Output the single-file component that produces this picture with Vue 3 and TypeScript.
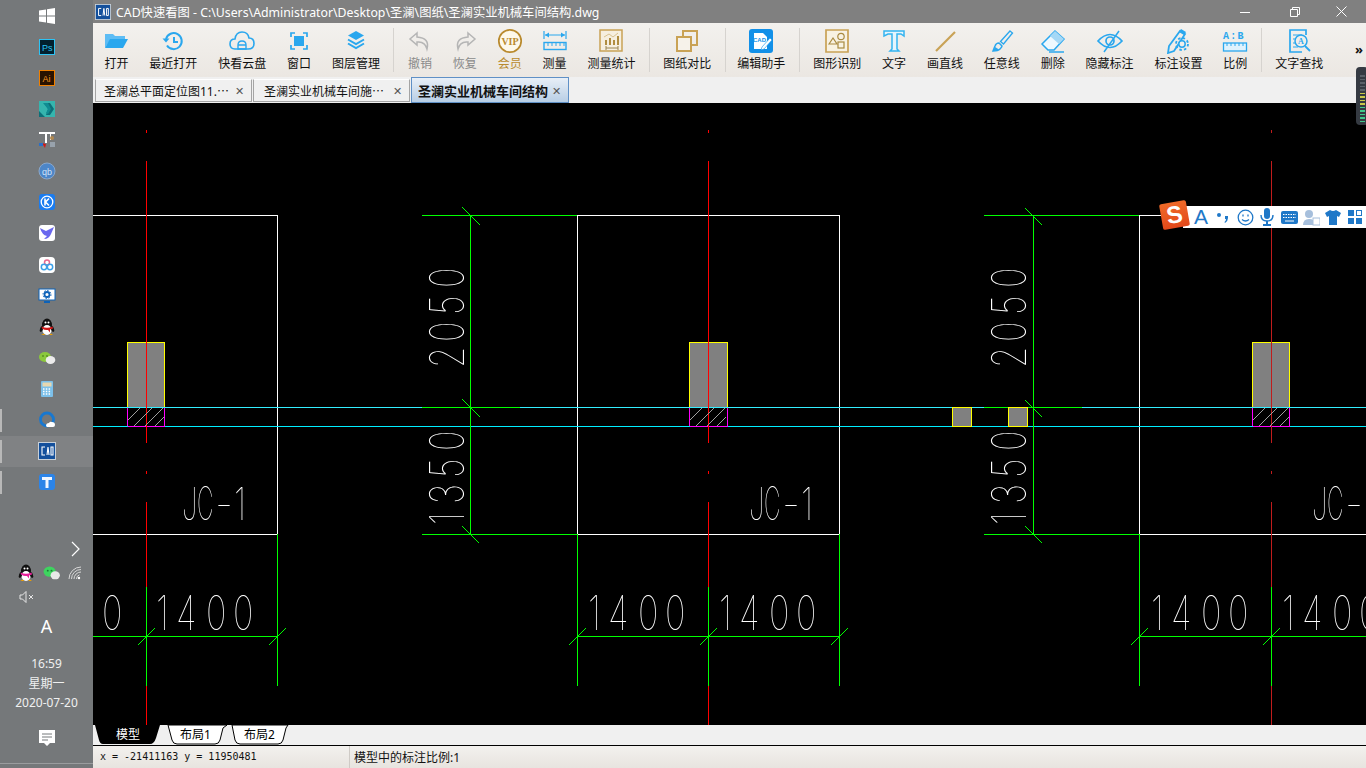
<template>
  <div class="desktop">
    <!-- taskbar on the left -->
    <aside class="taskbar">
      <div class="task-list">
        <div
          v-for="app in taskApps"
          :key="app.id"
          class="task-item"
          :class="{ running: app.running, current: app.current }"
        >
          <svg width="18" height="18" viewBox="0 0 18 18" v-html="app.icon"></svg>
        </div>
      </div>
      <div class="tray">
        <svg class="tray-more" width="12" height="16" viewBox="0 0 12 16">
          <path d="M2 1l7 7-7 7" fill="none" stroke="#fff" stroke-width="1.2" />
        </svg>
        <div class="tray-row">
          <svg width="18" height="20" viewBox="0 0 18 18" v-html="qqTray"></svg>
          <svg width="17" height="14" viewBox="0 0 18 15">
            <ellipse cx="7" cy="6" rx="6.5" ry="5.5" fill="#3ed45f" />
            <ellipse cx="13" cy="10" rx="5" ry="4.3" fill="#e8e8e8" />
            <circle cx="5" cy="5" r="1" fill="#1a7a35" />
            <circle cx="9" cy="5" r="1" fill="#1a7a35" />
          </svg>
          <svg width="14" height="14" viewBox="0 0 14 14" fill="none" stroke="#d8d8d8" stroke-width="1">
            <path d="M1 13a12 12 0 0 1 12-12M3.500 13a9.500 9.500 0 0 1 9.500-9.500M6 13a7 7 0 0 1 7-7M8.500 13a4.500 4.500 0 0 1 3-4.200" />
            <circle cx="11" cy="12" r="1.200" fill="#fff" stroke="none" />
          </svg>
        </div>
        <svg class="tray-sound" width="16" height="14" viewBox="0 0 16 14" fill="none" stroke="#e6e6e6" stroke-width="1">
          <path d="M1 5h2.500L7 1.500v11L3.500 9H1zM10 5l4 4M14 5l-4 4" />
        </svg>
        <div class="ime-letter">A</div>
        <div class="clock">16:59</div>
        <div class="clock">星期一</div>
        <div class="clock">2020-07-20</div>
        <svg class="notice" width="16" height="17" viewBox="0 0 16 17">
          <path d="M0 0h16v13h-5l-3 3-3-3H0z" fill="#fff" />
          <path d="M3 4h10M3 7h10M3 10h6" stroke="#75787a" stroke-width="1" />
        </svg>
        <div class="tray-line"></div>
      </div>
    </aside>

    <main class="window">
      <header class="titlebar">
        <svg class="app-logo" width="16" height="16" viewBox="0 0 18 18" v-html="cadIcon"></svg>
        <span class="title-text">CAD快速看图 - C:\Users\Administrator\Desktop\圣澜\图纸\圣澜实业机械车间结构.dwg</span>
        <div class="win-buttons">
          <svg class="win-min" width="10" height="10" viewBox="0 0 10 10"><path d="M0 5.500h10" stroke="#fff" /></svg>
          <svg width="10" height="10" viewBox="0 0 10 10" fill="none" stroke="#fff"><path d="M.5 2.500h7v7h-7zM2.500 2.500v-2h7v7h-2" /></svg>
          <svg width="11" height="11" viewBox="0 0 11 11"><path d="M.5.500l10 10M10.500.500l-10 10" stroke="#fff" /></svg>
        </div>
      </header>

      <nav class="toolbar">
        <template v-for="tool in tools" :key="tool.label">
          <div v-if="tool.sep" class="tool-sep"></div>
          <div class="tool" :class="tool.tone">
            <svg width="26" height="26" viewBox="0 0 26 26" v-html="tool.icon"></svg>
            <span>{{ tool.label }}</span>
          </div>
        </template>
        <span class="tool-more">»</span>
      </nav>

      <div class="doc-tabs">
        <div class="doc-tab">
          <span class="doc-name">圣澜总平面定位图11.⋯</span><span class="doc-x">✕</span>
        </div>
        <div class="doc-tab second">
          <span class="doc-name">圣澜实业机械车间施⋯</span><span class="doc-x">✕</span>
        </div>
        <div class="doc-tab active">
          <span class="doc-name">圣澜实业机械车间结构</span><span class="doc-x">✕</span>
        </div>
      </div>

      <!-- the drawing itself, coordinates are page pixels -->
      <svg class="drawing" viewBox="93 103 1273 622" shape-rendering="crispEdges">
        <g v-for="col in columns" :key="col.cx">
          <path :d="outline(col)" fill="none" stroke="#fff" />
          <path :d="`M${col.left + 0.5} 534V686M${col.right + 0.5} 534V686`" stroke="#0f0" />
          <rect :x="col.post + 0.5" y="342.500" :width="col.postW" height="65" fill="#808080" stroke="#ff0" />
          <rect :x="col.post + 0.5" y="407.500" :width="col.postW" height="19" fill="#000" stroke="#f0f" />
        </g>
        <path d="M93 426.500H1366" stroke="#00eeff" />
        <path d="M93 407.500H1366" stroke="#33eeff" />
        <path
          v-for="col in columns"
          :key="'m' + col.cx"
          :d="`M${col.post + 0.5} 426.500h${col.postW}`"
          stroke="#f0f"
        />
        <g v-for="col in columns" :key="'d' + col.cx">
          <template v-if="col.dim">
            <path
              :d="`M${col.dimStart} 215.500H${col.left}M${col.dimStart} 534.500H${col.left}M${col.dimStart} 407.500h98M${col.dim + 0.5} 215V534`"
              stroke="#0f0"
              fill="none"
            />
          </template>
          <path :d="`M${col.left} 636.500H${col.right + 1}`" stroke="#0f0" />
          <path :d="`M${col.cx + 0.5} 587V686`" stroke="#0f0" />
          <path
            :d="`M${col.cx + 0.5} 130V133M${col.cx + 0.5} 161V443M${col.cx + 0.5} 471V474M${col.cx + 0.5} 502V587M${col.cx + 0.5} 686V725`"
            :stroke="col.red"
          />
          <g shape-rendering="auto">
            <path :d="hatch(col)" stroke="#a0a0a0" />
            <path :d="ticks(col)" stroke="#0f0" />
          </g>
        </g>
        <rect x="952.500" y="407.500" width="19" height="19" fill="#808080" stroke="#ff0" />
        <rect x="1008.500" y="407.500" width="19" height="19" fill="#808080" stroke="#ff0" />
        <g class="cad-labels">
          <text
            v-for="(g, i) in glyphs"
            :key="i"
            class="cad-text"
            :transform="g.transform"
          >{{ g.ch }}</text>
        </g>
      </svg>

      <div class="sheet-tabs">
        <svg width="200" height="20" viewBox="0 0 200 20">
          <path d="M68 0l-4 3-3 12q-1 4-5 4h-38q-4 0-5-4l-4-15z" fill="#fff" transform="translate(66 0)" stroke="#000" />
          <path d="M132 0l-2 3-3 12q-1 4-5 4h-38q-4 0-5-4l-3-15z" fill="#fff" transform="translate(63 0)" stroke="#000" />
          <path d="M2 0h65l-4 13q-2 6-6 6H10q-3 0-4-4z" fill="#000" />
          <text x="23" y="14" fill="#fff">模型</text>
          <text x="87" y="14" fill="#000">布局1</text>
          <text x="151" y="14" fill="#000">布局2</text>
        </svg>
      </div>

      <footer class="statusbar">
        <div class="coords">x = -21411163 y = 11950481</div>
        <div class="scale">模型中的标注比例:1</div>
      </footer>
    </main>

    <!-- floating widgets -->
    <div class="ime-bar">
      <div class="ime-logo">S</div>
      <span class="ime-a">A</span>
      <svg width="16" height="16" viewBox="0 0 16 16" fill="#1f78c8">
        <circle cx="4" cy="6" r="2" />
        <path d="M10 7h3v2q0 3-3 5l-.500-1q1.500-1 1.500-3h-1z" />
      </svg>
      <svg width="17" height="17" viewBox="0 0 17 17" fill="none" stroke="#1f78c8" stroke-width="1.300">
        <circle cx="8.500" cy="8.500" r="7.300" />
        <path d="M6 5.500v2M11 5.500v2M5 10.500q3.500 3 7 0" />
      </svg>
      <svg width="14" height="18" viewBox="0 0 14 18" fill="#1f78c8">
        <rect x="4" width="6" height="11" rx="3" />
        <path d="M1 7q0 6 6 6t6-6" fill="none" stroke="#1f78c8" stroke-width="1.400" />
        <path d="M6 13h2v3h3v2H3v-2h3z" />
      </svg>
      <svg width="17" height="13" viewBox="0 0 17 13">
        <rect width="17" height="13" rx="2" fill="#1f78c8" />
        <path d="M2 3.500h13M2 6.500h13" stroke="#fff" stroke-dasharray="1.500 1" />
        <path d="M4 10h9" stroke="#fff" />
      </svg>
      <svg width="17" height="17" viewBox="0 0 17 17" fill="#a6bfdc">
        <circle cx="6" cy="5" r="4" />
        <path d="M0 16q0-6 6-6 3 0 4 1v5z" />
        <rect x="10" y="9" width="7" height="7" fill="#fff" stroke="#a6bfdc" />
      </svg>
      <svg width="16" height="15" viewBox="0 0 16 15" fill="#1f78c8">
        <path d="M5 0q3 2 6 0l5 3-2 4-2-1v9H4V6L2 7 0 3z" />
      </svg>
      <svg width="14" height="14" viewBox="0 0 14 14" fill="#1f78c8">
        <rect width="6" height="6" />
        <rect x="8.500" y=".5" width="5" height="5" fill="none" stroke="#1f78c8" />
        <rect y="8" width="6" height="6" />
        <rect x="8" y="8" width="6" height="6" />
      </svg>
    </div>

    <div class="meter">
      <i v-for="(c, i) in meterTicks" :key="i" :style="{ background: c }"></i>
    </div>
  </div>
</template>

<script setup lang="ts">
interface Tool {
  label: string
  icon: string
  sep?: boolean
  tone?: string
}

interface Column {
  cx: number
  left: number
  right: number
  post: number
  postW: number
  dim: number
  dimStart: number
  red: string
}

const blue = '#2aa7ee'
const gold = '#c9a255'

const cadIcon = `<rect width="18" height="18" fill="#c8d0d8"/><rect x="1" y="1" width="16" height="16" fill="#14509c"/>
<path d="M7 5H4v8h3M9 13l1-8 1 8M13 5h2v8h-2z" fill="none" stroke="#fff" stroke-width="1.100"/>`

const qqBody = (scarf: string) => `<ellipse cx="9" cy="7" rx="5" ry="6.500" fill="#111"/>
<ellipse cx="9" cy="12" rx="4.500" ry="5" fill="#fff"/><ellipse cx="3.500" cy="11" rx="1.500" ry="3" fill="#111" transform="rotate(20 3.500 11)"/>
<ellipse cx="14.500" cy="11" rx="1.500" ry="3" fill="#111" transform="rotate(-20 14.500 11)"/>
<path d="M3.500 8.500q5.500 2.500 11 0l.5 2-3 1v3l-2-2.500q-3 .5-6-1.500z" fill="${scarf}"/>
<circle cx="7.500" cy="4.500" r="1" fill="#fff"/><circle cx="10.500" cy="4.500" r="1" fill="#fff"/>
<path d="M3 17h4l-1-1.500zM11 17h4l-2-1.500z" fill="#f0a000"/>`

const qqTray = qqBody('#e8209a')

const taskApps = [
  { id: 'win', icon: `<path d="M1 3.500l7-1v6H1zM9 2.300L17 1v7.500H9zM1 9.500h7v6l-7-1zM9 9.500h8V17l-8-1.200z" fill="#fff"/>` },
  { id: 'ps', icon: `<rect x=".5" y=".5" width="15" height="15" transform="translate(1 1)" fill="#02202f" stroke="#2cc3f5"/><text x="4" y="13" font-size="9" font-family="Liberation Sans" fill="#2cc3f5">Ps</text>` },
  { id: 'ai', icon: `<rect x=".5" y=".5" width="15" height="15" transform="translate(1 1)" fill="#2a1300" stroke="#f08000"/><text x="4.500" y="13" font-size="9" font-family="Liberation Sans" fill="#f89820">Ai</text>` },
  { id: 'max', icon: `<rect x="1" y="1" width="16" height="16" fill="#35b5ae"/><path d="M1 17V11l6 6zM6 3h6l4 6-4 6H8l2-6z" fill="#0d6f78"/><path d="M5 3h5l3 6-3 5-2-1 2-4z" fill="#0f8c92"/>` },
  { id: 'text', icon: `<path d="M1 1h16v2H1zM7 3h2v9H7zM12 3h1v6h-1z" fill="#fff"/><path d="M4 12l4 1-1 4z" fill="#d01818"/><rect x="1" y="12" width="4" height="3" fill="#2a70c8"/><rect x="12" y="11" width="5" height="5" fill="#98a2ac"/><circle cx="14" cy="7" r="2" fill="#b08850"/>` },
  { id: 'qb', icon: `<circle cx="9" cy="9" r="8" fill="#4d86c8" stroke="#8aa8cc"/><text x="9" y="12.500" text-anchor="middle" font-size="9" font-family="Liberation Sans" fill="#cfe3f8">qb</text>` },
  { id: 'k', icon: `<rect x="1" y="1" width="16" height="16" rx="3" fill="#1a7cf0"/><circle cx="9" cy="9" r="5.800" fill="none" stroke="#fff" stroke-width="1.300"/><path d="M7 5.500v7M11 5.500L7.500 9l3.500 3.500" fill="none" stroke="#fff" stroke-width="1.600"/>` },
  { id: 'bird', icon: `<rect x="1" y="1" width="16" height="16" rx="3" fill="#fff"/><path d="M2 4l6 3 8-4-3 7q-2 5-7 5l3-3Q4 11 2 4z" fill="#6a68ee"/>` },
  { id: 'rings', icon: `<rect x="1" y="1" width="16" height="16" rx="4" fill="#fff"/><g fill="none" stroke-width="1.500"><circle cx="9" cy="6.500" r="2.500" stroke="#e86a90"/><circle cx="6" cy="11" r="2.700" stroke="#3ca0e8"/><circle cx="12" cy="11" r="2.700" stroke="#3ca0e8"/></g>` },
  { id: 'monitor', icon: `<rect x="1" y="2" width="16" height="11" fill="#fff" stroke="#0d62b8"/><path d="M6 14h6v2H6z" fill="#0d62b8"/><circle cx="9" cy="7.500" r="2.500" fill="none" stroke="#0d62b8" stroke-width="1.800"/><circle cx="9" cy="7.500" r="4" fill="none" stroke="#0d62b8" stroke-dasharray="1.500 1.600"/>` },
  { id: 'qq', icon: qqBody('#d01818') },
  { id: 'wechat', icon: `<ellipse cx="7" cy="8" rx="6" ry="5" fill="#8bc83c"/><ellipse cx="12.500" cy="11" rx="4.800" ry="4" fill="#ececec"/><circle cx="5" cy="7" r=".8" fill="#356b10"/><circle cx="9" cy="7" r=".8" fill="#356b10"/>` },
  { id: 'calc', icon: `<rect x="3" y="1" width="12" height="16" rx="1" fill="#7cc0ea"/><rect x="4.500" y="2.500" width="9" height="4" fill="#e8d8b0"/><path d="M5 9h8M5 11.500h8M5 14h8" stroke="#fff" stroke-width="1.300" stroke-dasharray="1.500 1.300"/>` },
  { id: 'cloud', running: true, icon: `<circle cx="9" cy="8.500" r="6.500" fill="none" stroke="#1878d0" stroke-width="2.800"/><path d="M8 15q0-3 3-3 1-2 3-1 3 0 3 3 0 2-2 2H9z" fill="#fff"/>` },
  { id: 'cad', running: true, current: true, icon: cadIcon },
  { id: 'tblue', running: true, icon: `<rect x="1" y="1" width="16" height="16" rx="3" fill="#2c84e8"/><path d="M4 4h10v3h-3.500v8h-3V7H4z" fill="#f0f6ff"/>` },
]

const tools: Tool[] = [
  { label: '打开', icon: `<path d="M2 6h8l2 2h10v3H8l-6 9z" fill="#5dbcf4"/><path d="M7 11h18l-5 9H2z" fill="${blue}"/>` },
  { label: '最近打开', icon: `<g fill="none" stroke="${blue}" stroke-width="2"><path d="M6 11a8 8 0 1 1 1 6.500"/><path d="M14 9v5h4"/></g><path d="M2.500 10.500h7l-3.500 4z" fill="${blue}"/>` },
  { label: '快看云盘', icon: `<path d="M6 21q-5 0-5-5t5-5q1-7 7-7t7 6q5 0 5 5.500T19 21z" fill="none" stroke="${blue}" stroke-width="1.600"/><path d="M9 21v-4q0-4 4-4t4 4v4zM9 17h8" fill="none" stroke="${blue}" stroke-width="1.400"/>` },
  { label: '窗口', icon: `<path d="M5 9V5h4M17 5h4v4M21 17v4h-4M9 21H5v-4" fill="none" stroke="${blue}" stroke-width="1.700"/><rect x="8" y="8" width="10" height="10" fill="${blue}"/>` },
  { label: '图层管理', icon: `<path d="M13 3l8 4.500-8 4.500-8-4.500z" fill="${blue}"/><path d="M5 11.500l8 4.500 8-4.500M5 15.500l8 4.500 8-4.500" fill="none" stroke="${blue}" stroke-width="2"/>` },
  { label: '撤销', sep: true, tone: 'off', icon: `<path d="M10 5L3 11l7 6v-3q8-1 10 7 3-11-10-12z" fill="none" stroke="#b5b5b5" stroke-width="1.500"/>` },
  { label: '恢复', tone: 'off', icon: `<path d="M16 5l7 6-7 6v-3q-8-1-10 7-3-11 10-12z" fill="none" stroke="#b5b5b5" stroke-width="1.500"/>` },
  { label: '会员', tone: 'vip', icon: `<circle cx="13" cy="13" r="11.200" fill="#fdf8ea" stroke="#b98a2e" stroke-width="1.700"/><text x="13" y="16.500" text-anchor="middle" font-size="10" font-weight="700" font-family="Liberation Serif" fill="#b98a2e">VIP</text>` },
  { label: '测量', icon: `<g fill="none" stroke="${blue}"><path d="M2 3v8M24 3v8M3 7h20" stroke-width="1.200"/><rect x="2" y="14.500" width="22" height="7" stroke-width="1.400"/><path d="M6 15v3M10 15v3M14 15v3M18 15v3M22 15v3"/></g><path d="M3 7l4-2.500v5zM23 7l-4-2.500v5z" fill="${blue}"/>` },
  { label: '测量统计', icon: `<path d="M2 2h22v21H2z" fill="#f6efe0" stroke="${gold}" stroke-width="1.500"/><path d="M7 12h2v5H7zM11 10h2v7h-2zM15 12h2v5h-2zM19 8h2v9h-2z" fill="#b08d40"/><path d="M6 9l5-3 4 3 5-4" fill="none" stroke="#d8c290"/><path d="M8 20h12M8 18v4M20 18v4" stroke="#9a8550" fill="none"/>` },
  { label: '图纸对比', sep: true, icon: `<g fill="none" stroke="${gold}" stroke-width="2"><rect x="9" y="3" width="14" height="14"/><rect x="3" y="9" width="14" height="14" fill="#f6f2ea"/></g>` },
  { label: '编辑助手', sep: true, tone: 'tight', icon: `<rect x="1" y="1" width="24" height="24" rx="3" fill="#1290e8"/><path d="M6 5h9l4 4v12H6z" fill="#fff"/><text x="11.500" y="14" text-anchor="middle" font-size="6" font-weight="700" font-family="Liberation Sans" fill="#1290e8">CAD</text><path d="M14 19l8-9 2 2-8 9-3 1z" fill="#fff" stroke="#1290e8" stroke-width=".6"/>` },
  { label: '图形识别', sep: true, icon: `<path d="M2 2h22v22H2z" fill="#f8f2e2" stroke="${gold}" stroke-width="1.700"/><g fill="none" stroke="#a98a40" stroke-width="1.200"><circle cx="17" cy="8.500" r="3.200"/><path d="M5 16l4-6 4 6z"/><rect x="14" y="14" width="6" height="6"/></g>` },
  { label: '文字', icon: `<path d="M3 3h20v5l-3-2h-4v15l2 2H9l2-2V6H7L3 8z" fill="#e6f5fd" stroke="#35b4f0" stroke-width="1.500"/>` },
  { label: '画直线', icon: `<path d="M4 23L23 4" stroke="${gold}" stroke-width="2.200"/>` },
  { label: '任意线', icon: `<path d="M21 3l2.500 2-9 11-3-2.500z" fill="none" stroke="${blue}" stroke-width="1.300"/><path d="M10 15q-3 0-4 3l-2 5q5 0 7-2t2-3z" fill="none" stroke="${blue}" stroke-width="1.500"/><path d="M6 19l-2 4q4 0 6-1.500z" fill="${blue}"/>` },
  { label: '删除', icon: `<path d="M15 3l9 8-10 11H8l-6-6z" fill="#eef8fe" stroke="${blue}" stroke-width="1.500"/><path d="M10 8l9 8 5-5-9-8z" fill="#a5d8f6"/><path d="M9 24h15" stroke="${blue}" stroke-width="1.500"/>` },
  { label: '隐藏标注', icon: `<path d="M1 13q12-13 24 0-12 13-24 0z" fill="none" stroke="${blue}" stroke-width="1.700"/><circle cx="13" cy="13" r="4" fill="none" stroke="${blue}" stroke-width="1.700"/><path d="M7 24L22 3" stroke="${blue}" stroke-width="1.500"/>` },
  { label: '标注设置', icon: `<path d="M15 3l5 3-11 17-6 2 1-7z" fill="none" stroke="${blue}" stroke-width="1.800"/><path d="M16 1l5 3-2 3-5-3z" fill="${blue}"/><circle cx="17" cy="16" r="3.200" fill="#f1eeea" stroke="${blue}" stroke-width="1.500"/><circle cx="17" cy="16" r="6" fill="none" stroke="${blue}" stroke-width="1.800" stroke-dasharray="2.500 2.200"/>` },
  { label: '比例', icon: `<text x="1" y="11" font-size="10" font-weight="700" font-family="Liberation Mono" letter-spacing="1.200" fill="${blue}">A:B</text><rect x="1.500" y="15" width="23" height="8" fill="#dff2fd" stroke="${blue}" stroke-width="1.300"/><path d="M5 15v3M9 15v3M13 15v3M17 15v3M21 15v3" stroke="${blue}"/>` },
  { label: '文字查找', sep: true, icon: `<path d="M20 7V2H4v22h12" fill="none" stroke="${blue}" stroke-width="1.700"/><path d="M7 7h9M7 11h3M7 15h3M7 19h5" stroke="${blue}"/><circle cx="15" cy="13" r="6" fill="#f1eeea" stroke="${blue}" stroke-width="1.500"/><text x="15" y="16" text-anchor="middle" font-size="8" font-weight="700" font-family="Liberation Serif" fill="${blue}">A</text><path d="M19 18l5 5" stroke="${blue}" stroke-width="1.800"/>` },
]

const columns: Column[] = [
  { cx: 146, left: 15, right: 277, post: 127, postW: 37, dim: 0, dimStart: 0, red: '#ff0000' },
  { cx: 708, left: 577, right: 839, post: 689, postW: 38, dim: 470, dimStart: 422, red: '#ff0000' },
  { cx: 1271, left: 1139, right: 1401, post: 1252, postW: 37, dim: 1033, dimStart: 984, red: '#c01c1c' },
]

const outline = (c: Column) =>
  `M${c.left + 0.5} 534.500H${c.right + 0.5}V215.500H${c.left + 0.5}V534.500`

const hatch = (c: Column) => {
  const x = c.post
  return `M${x + 1} 420L${x + 13} 408M${x + 7} 426L${x + 25} 408M${x + 18} 426L${x + 36} 408M${x + 28} 426L${x + 37} 417`
}

const ticks = (c: Column) => {
  const bottom = [c.left, c.cx, c.right]
    .map((x) => `M${x - 8} 645L${x + 9} 628`)
    .join('')
  if (!c.dim) return bottom
  const d = c.dim
  // the third column sits one pixel lower on its upper ticks
  const up = c.cx > 1000 ? 1 : 0
  return `${bottom}M${d - 8} ${207 + up}L${d + 9 + (1 - up)} 225M${d - 8} ${399 + up}L${d + 9 + (1 - up)} 417M${d - 8} 526L${d + 9} 543`
}

// dimension and label text of the drawing
const glyphs: { ch: string; transform: string }[] = []
const flat = (ch: string, x: number, y = 630, sx = 0.72, size = 1) =>
  glyphs.push({ ch, transform: `translate(${x} ${y}) scale(${sx * size} ${size})` })
const upright = (ch: string, x: number, y: number) =>
  glyphs.push({ ch, transform: `translate(${x} ${y}) rotate(-90) scale(0.72 1)` })

flat('0', 102)
for (const start of [156, 588, 719, 1151, 1282]) {
  flat('1', start)
  flat('4', start + 20)
  flat('0', start + 50)
  flat('0', start + 77)
}
for (const dx of [0, 562]) {
  const base = 464 + dx
  const digits: [string, number][] = [
    ['1', 525], ['3', 504], ['5', 478], ['0', 451],
    ['2', 368], ['0', 342], ['5', 315], ['0', 288],
  ]
  digits.forEach(([ch, y]) => upright(ch, base, y))
}
for (const x of [182, 749, 1312]) {
  flat('J', x, 520, 0.6, 0.95)
  flat('C', x + 15, 520, 0.5, 0.95)
  flat('-', x + 33, 520, 0.9, 0.95)
  if (x < 1300) flat('1', x + 52, 520, 0.72, 0.95)
}

const meterTicks = Array.from({ length: 14 }, (_, i) => (i < 5 ? '#5a6068' : i < 9 ? '#c8c84a' : '#3fc88a'))
</script>

<style scoped>
.desktop {
  position: relative;
  display: flex;
  width: 1366px;
  height: 768px;
  overflow: hidden;
  font-family: "Noto Sans", "Noto Sans CJK SC", sans-serif;
}

.taskbar {
  width: 93px;
  flex: none;
  display: flex;
  flex-direction: column;
  background: #75787a;
}

.task-item {
  position: relative;
  height: 31.140px;
  display: flex;
  align-items: center;
  justify-content: center;
}

.task-item svg {
  display: block;
}

.task-item.running::before {
  content: "";
  position: absolute;
  left: 0;
  top: 4px;
  bottom: 4px;
  width: 2px;
  background: #b8b8b8;
}

.task-item.current {
  background: #808284;
}

.tray {
  display: flex;
  flex-direction: column;
  align-items: center;
  color: #fff;
  font-size: 12px;
}

.tray-more {
  align-self: flex-end;
  margin: 43px 11px 0 0;
}

.tray-row {
  display: flex;
  align-items: center;
  gap: 8px;
  margin-top: 6px;
  padding-left: 5px;
  height: 20px;
}

.tray-sound {
  align-self: flex-start;
  margin: 7px 0 0 19px;
}

.ime-letter {
  font-size: 18px;
  line-height: 24px;
  margin: 10px 0 16px;
}

.clock {
  line-height: 19.500px;
  color: #f0f0f0;
}

.notice {
  margin-top: 17px;
}

.tray-line {
  align-self: stretch;
  height: 1px;
  margin-top: 16px;
  background: #9a9c9e;
}

.window {
  flex: 1;
  min-width: 0;
  display: flex;
  flex-direction: column;
}

.titlebar {
  height: 23px;
  flex: none;
  display: flex;
  align-items: center;
  background: #808080;
  color: #fff;
  font-size: 12.300px;
  padding-left: 2px;
}

.app-logo {
  margin-right: 5px;
}

.title-text {
  white-space: nowrap;
}

.win-buttons {
  margin-left: auto;
  display: flex;
  align-items: center;
  gap: 36px;
  padding-right: 19px;
}

.win-min {
  margin-right: 4px;
}

.toolbar {
  height: 54px;
  flex: none;
  display: flex;
  position: relative;
  background: linear-gradient(#f3f1ee, #ebe7e2);
  padding-left: 1px;
  font-size: 12px;
}

.tool {
  display: flex;
  flex-direction: column;
  align-items: center;
  padding: 5px 10.450px 0;
  color: #111;
  white-space: nowrap;
}

.tool svg {
  display: block;
  margin: 0 -1px 1px;
}

.tool span {
  line-height: 18px;
}

.tool.off {
  color: #8a8a8a;
}

.tool.vip {
  color: #b98a2e;
}

.tool.tight {
  margin-left: -2px;
}

.tool-sep {
  width: 1px;
  height: 44px;
  margin: 5px 3px 0;
  background: #d6d3cf;
}

.tool-more {
  position: absolute;
  right: 3px;
  top: 17px;
  font-size: 13px;
  font-weight: 700;
  color: #111;
}

.doc-tabs {
  height: 26px;
  flex: none;
  display: flex;
  align-items: flex-end;
  gap: 1px;
  padding-left: 2px;
  background: #f0f0f0;
  font-size: 12px;
}

.doc-tab {
  width: 157px;
  height: 23px;
  margin-bottom: 1px;
  box-sizing: border-box;
  display: flex;
  align-items: center;
  justify-content: space-between;
  padding: 0 7px 0 8px;
  background: #f0f0f0;
  border: 1px solid #a4a4a4;
  border-top-color: #fff;
  color: #111;
}

.doc-tab.second {
  padding-left: 10px;
}

.doc-name {
  overflow: hidden;
  white-space: nowrap;
}

.doc-x {
  font-size: 11px;
  color: #555;
}

.doc-tab.active {
  height: 26px;
  width: 158px;
  margin-bottom: 0;
  padding-left: 6px;
  background: linear-gradient(#e8eff7, #b8cee5);
  border: 1px solid #5f90c6;
  font-weight: 700;
  font-size: 13px;
}

.doc-tab.active .doc-name {
  flex: none;
  width: 130px;
}

.doc-tab.active .doc-x {
  font-weight: 400;
}

.drawing {
  display: block;
  flex: none;
  width: 1273px;
  height: 622px;
  background: #000;
}

.cad-labels {
  filter: grayscale(1) brightness(1.4);
}

.cad-text {
  font-family: Inter, Lato, sans-serif;
  font-weight: 100;
  font-size: 48px;
  fill: #fff;
}

.sheet-tabs {
  height: 20px;
  flex: none;
  background: #f0f0f0;
  border-bottom: 1px solid #000;
}

.sheet-tabs svg {
  display: block;
  font-size: 12px;
}

.statusbar {
  flex: 1;
  display: flex;
  align-items: center;
  background: linear-gradient(#f3f1ee, #e8e4df);
  font-size: 12px;
  color: #111;
}

.coords {
  width: 257px;
  padding-left: 7px;
  box-sizing: border-box;
  font-family: "DejaVu Sans Mono", "Liberation Mono", monospace;
  font-size: 10px;
  border-right: 1px solid #cfcbc6;
  line-height: 22px;
  margin-right: 4px;
}

.ime-bar {
  position: absolute;
  left: 1183px;
  top: 206px;
  width: 183px;
  height: 22px;
  background: #fff;
  display: grid;
  grid-template-columns: repeat(8, 22px);
  align-items: center;
  justify-items: center;
  padding-left: 7px;
  box-sizing: border-box;
}

.ime-logo {
  position: absolute;
  left: -22px;
  top: -4px;
  width: 27px;
  height: 26px;
  border-radius: 2px;
  background: linear-gradient(#f06a28, #e2481a);
  transform: rotate(-10deg);
  color: #fff;
  font: 700 24px/26px "Liberation Sans", sans-serif;
  text-align: center;
}

.ime-a {
  color: #1f78c8;
  font: 400 21px/22px "Liberation Sans", sans-serif;
}

.meter {
  position: absolute;
  left: 1356px;
  top: 67px;
  width: 12px;
  height: 58px;
  box-sizing: border-box;
  background: #353a42;
  border-radius: 4px;
  padding: 8px 2px 0 4px;
  display: flex;
  flex-direction: column;
  gap: 2px;
}

.meter i {
  display: block;
  height: 1.500px;
  width: 5px;
}
</style>

<style>
html,
body {
  margin: 0;
  background: #000;
}
</style>
